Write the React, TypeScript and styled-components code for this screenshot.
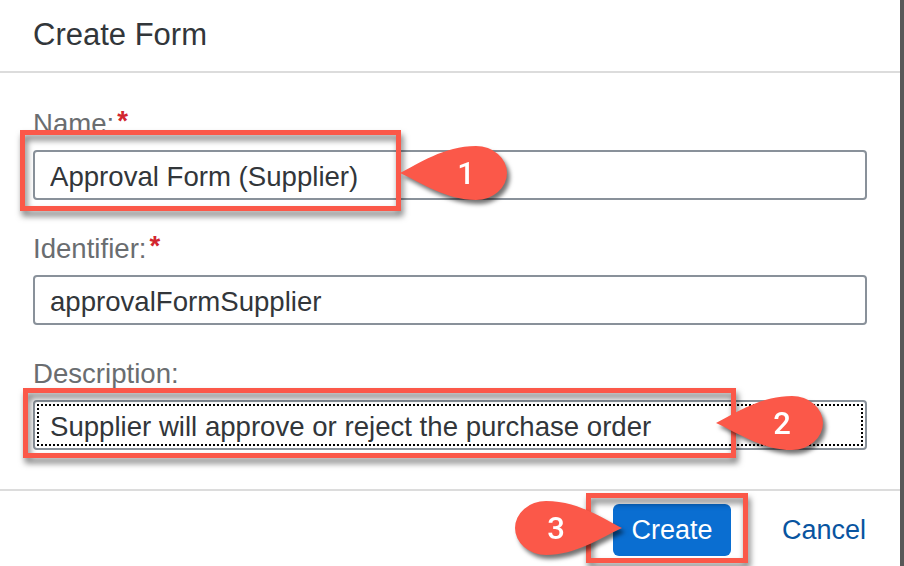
import React from "react";
import styled, { createGlobalStyle } from "styled-components";

const Global = createGlobalStyle`
  html, body {
    margin: 0;
    padding: 0;
    width: 904px;
    height: 566px;
    overflow: hidden;
    background: #ffffff;
  }
  * { box-sizing: border-box; }
`;

const FONT = `"Liberation Sans", Arial, sans-serif`;

const Dialog = styled.div`
  position: relative;
  width: 904px;
  height: 566px;
  border-right: 4px solid #585858;
  background: #fff;
  display: flex;
  flex-direction: column;
  font-family: ${FONT};
`;

const Header = styled.header`
  height: 73px;
  flex: none;
  border-bottom: 2px solid #dcdcdc;
  padding: 19px 33px 0;
`;

const Title = styled.h1`
  margin: 0;
  font-size: 31px;
  line-height: 31px;
  font-weight: 400;
  color: #32363a;
`;

const Content = styled.div`
  padding: 34px 33px 0;
  display: flex;
  flex-direction: column;
`;

const Field = styled.div`
  display: flex;
  flex-direction: column;
  gap: 9px;
  margin-bottom: 32px;
`;

const Label = styled.label`
  font-size: 27.6px;
  line-height: 34px;
  height: 34px;
  color: #6a6d70;
`;

const Star = styled.span`
  color: #d2262f;
  font-weight: 700;
  margin-left: 3px;
  position: relative;
  top: -3px;
`;

const Input = styled.input<{ $focused?: boolean }>`
  width: 100%;
  height: 50px;
  margin: 0;
  border: 2px solid #89919a;
  border-radius: 4px;
  padding: 4px 15px 0;
  font-family: ${FONT};
  font-size: 27.6px;
  color: #32363a;
  background: #fff;
  outline: ${(p) => (p.$focused ? "2px dotted #000" : "none")};
  outline-offset: -6px;
`;

const Footer = styled.footer`
  margin-top: auto;
  height: 77px;
  flex: none;
  border-top: 2px solid #dcdcdc;
  padding: 13px 18px 10px 0;
  display: flex;
  justify-content: flex-end;
  align-items: flex-start;
  gap: 35px;
`;

const PrimaryButton = styled.button`
  width: 118px;
  height: 52px;
  border: none;
  border-radius: 6px;
  background: #0a6ed1;
  color: #fff;
  font-family: ${FONT};
  font-size: 27px;
  padding: 0;
`;

const GhostButton = styled.button`
  height: 52px;
  border: none;
  background: transparent;
  color: #0854a0;
  font-family: ${FONT};
  font-size: 27px;
  padding: 0 16px;
`;

const Highlight = styled.div<{ $x: number; $y: number; $w: number; $h: number }>`
  position: absolute;
  left: ${(p) => p.$x}px;
  top: ${(p) => p.$y}px;
  width: ${(p) => p.$w}px;
  height: ${(p) => p.$h}px;
  border: 5px solid #fb5849;
  filter: drop-shadow(2px 5px 3px rgba(0, 0, 0, 0.55));
  pointer-events: none;
`;

const CalloutSvg = styled.svg<{ $x: number; $y: number }>`
  position: absolute;
  left: ${(p) => p.$x}px;
  top: ${(p) => p.$y}px;
  overflow: visible;
  filter: drop-shadow(3px 4px 2px rgba(0, 0, 0, 0.55));
  pointer-events: none;
`;

const CalloutText = styled.text`
  font-family: Roboto, "Liberation Sans", sans-serif;
  font-weight: 500;
  font-size: 31px;
  fill: #ffffff;
`;

const DROP = "M0,28 C18,19 44,1 76,1 A31,27 0 0 1 76,55 C46,55 22,38 0,28 Z";

function Callout({ x, y, n, flip }: { x: number; y: number; n: string; flip?: boolean }) {
  return (
    <CalloutSvg $x={x} $y={y} width={110} height={58} viewBox="0 0 110 58">
      <path d={DROP} fill="#fb5849" transform={flip ? "translate(108,0) scale(-1,1)" : undefined} />
      <CalloutText x={flip ? 42 : 66} y={39} textAnchor="middle">
        {n}
      </CalloutText>
    </CalloutSvg>
  );
}

export default function App() {
  return (
    <>
      <Global />
      <Dialog>
        <Header>
          <Title>Create Form</Title>
        </Header>
        <Content>
          <Field>
            <Label>
              Name:<Star>*</Star>
            </Label>
            <Input readOnly value="Approval Form (Supplier)" />
          </Field>
          <Field>
            <Label>
              Identifier:<Star>*</Star>
            </Label>
            <Input readOnly value="approvalFormSupplier" />
          </Field>
          <Field>
            <Label>Description:</Label>
            <Input readOnly $focused value="Supplier will approve or reject the purchase order" />
          </Field>
        </Content>
        <Footer>
          <PrimaryButton>Create</PrimaryButton>
          <GhostButton>Cancel</GhostButton>
        </Footer>

        <Highlight $x={20} $y={130} $w={381} $h={81} />
        <Highlight $x={23} $y={388} $w={713} $h={70} />
        <Highlight $x={586} $y={493} $w={162} $h={70} />
        <Callout x={400} y={145} n="1" />
        <Callout x={716} y={395} n="2" />
        <Callout x={514} y={500} n="3" flip />
      </Dialog>
    </>
  );
}
